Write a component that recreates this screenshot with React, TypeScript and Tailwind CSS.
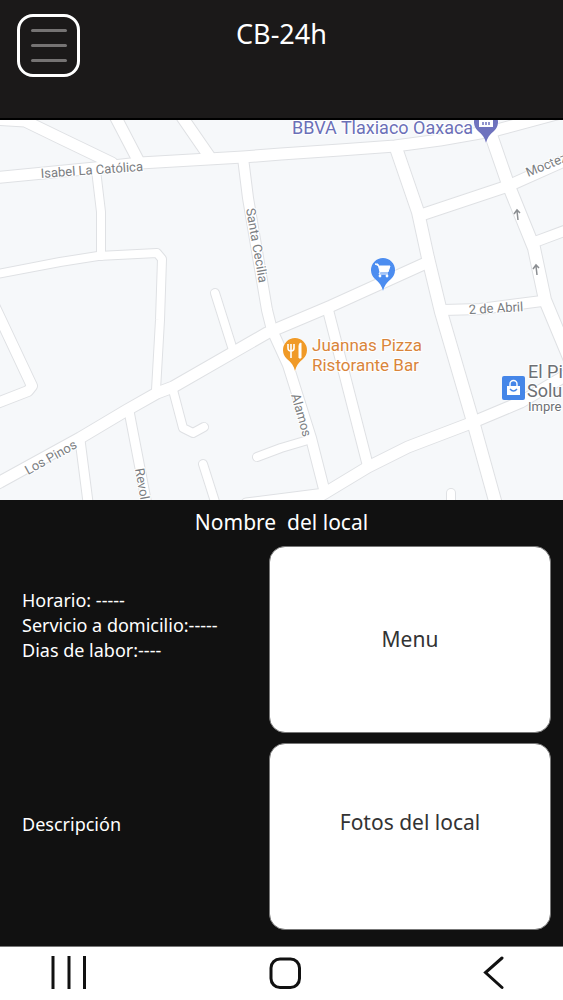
import React from "react";

type Road = { d: string; w: number };

const roads: Road[] = [
  { d: "M-8 178 L95 168 L140 163 L243 157 L281 154 L340 150 L395 146 L440 140 L497 130 L575 109", w: 11 },
  { d: "M-8 119 L25 121 L60 138 L112 163", w: 11 },
  { d: "M114 114 L139 162", w: 11 },
  { d: "M180 114 L209 156", w: 11 },
  { d: "M96 170 L101 212 L101 256", w: 8 },
  { d: "M-8 275 L60 262 L98 256 L157 253 L162 259 L160 320 L156 390", w: 8 },
  { d: "M243 158 L248 198 L267 310 L272 330 L288 365 L311 438 L325 493", w: 10 },
  { d: "M215 293 L233 350", w: 8 },
  { d: "M-8 301 L0 318 L32 386 L28 391 L-8 405", w: 10 },
  { d: "M-8 486 L0 482 L80 438 L127 410 L157 393 L173 387 L267 333 L331 306 L426 263", w: 11 },
  { d: "M80 440 L89 510", w: 9 },
  { d: "M129 411 L148 510", w: 9 },
  { d: "M173 390 L183 428 L193 433 L204 427", w: 8 },
  { d: "M203 464 L217 508", w: 8 },
  { d: "M257 457 L281 448 L308 440", w: 8 },
  { d: "M246 503 L325 493", w: 9 },
  { d: "M296 510 L325 493 L368 467 L408 447 L471 423 L521 402 L575 370", w: 11 },
  { d: "M328 310 L368 466", w: 10 },
  { d: "M396 148 L418 212 L428 258 L441 312 L474 425 L497 508", w: 12 },
  { d: "M421 215 L508 186 L575 156", w: 11 },
  { d: "M490 132 L508 184 L534 248 L545 300 L575 372", w: 12 },
  { d: "M532 243 L575 227", w: 10 },
  { d: "M443 310 L480 309 L542 301", w: 10 },
  { d: "M451 493 L451 510", w: 8 },
];

function Pin({ x, y, color, children }: { x: number; y: number; color: string; children: React.ReactNode }) {
  return (
    <g transform={`translate(${x} ${y})`}>
      <path
        d="M0 21 C-1 16 -4 12 -8 9 A12 12 0 1 1 8 9 C4 12 1 16 0 21Z"
        fill={color}
        stroke="#fff"
        strokeWidth="1"
        paintOrder="stroke"
      />
      {children}
    </g>
  );
}

function StreetMap() {
  return (
    <svg
      viewBox="0 120 563 380"
      preserveAspectRatio="xMidYMid slice"
      className="block h-[380px] w-full bg-[#f6f8fa] font-['Roboto',sans-serif]"
      role="img"
      aria-label="Mapa"
    >
      <g fill="none" stroke="#dfe1e4" strokeLinecap="round" strokeLinejoin="round">
        {roads.map((r) => (
          <path key={r.d} d={r.d} strokeWidth={r.w + 2} />
        ))}
      </g>
      <g fill="none" stroke="#ffffff" strokeLinecap="round" strokeLinejoin="round">
        {roads.map((r) => (
          <path key={r.d} d={r.d} strokeWidth={r.w} />
        ))}
      </g>

      <g fill="#7b7e82" fontSize="13" stroke="#fff" strokeWidth="2" paintOrder="stroke">
        <text transform="translate(41 178) rotate(-4)">Isabel La Católica</text>
        <text transform="translate(246 209) rotate(80)">Santa Cecilia</text>
        <text transform="translate(291 395) rotate(74)">Alamos</text>
        <text transform="translate(28 475) rotate(-29)">Los Pinos</text>
        <text transform="translate(135 469) rotate(80)">Revol</text>
        <text transform="translate(469 314) rotate(-3)">2 de Abril</text>
        <text transform="translate(528 177) rotate(-22)">Moctez</text>
      </g>

      <g fill="none" stroke="#8b8e92" strokeWidth="1.5">
        <path d="M518 220 L517 211 M514 214 L517 210 L520 213" />
        <path d="M537 275 L536 266 M533 269 L536 265 L539 268" />
      </g>

      <text x="292" y="134" fontSize="18" fill="#6b70b8" stroke="#fff" strokeWidth="2" paintOrder="stroke">
        BBVA Tlaxiaco Oaxaca
      </text>
      <Pin x={486} y={122} color="#6f73be">
        <path d="M-7 -4 H7 V5 H-7Z" fill="#fff" />
        <path d="M-3 3 V0 M0 3 V0 M3 3 V0" stroke="#6f73be" strokeWidth="1.5" />
      </Pin>

      <Pin x={383} y={270} color="#4c8df0">
        <path d="M-8 -6 H-5 L-3 2 H5 L7 -4 H-4Z" fill="#fff" stroke="#fff" strokeWidth="1" strokeLinejoin="round" />
        <path d="M-3 2 L-4 4 H5" fill="none" stroke="#fff" strokeWidth="1" />
        <circle cx="-3" cy="6" r="1.4" fill="#fff" />
        <circle cx="4" cy="6" r="1.4" fill="#fff" />
      </Pin>

      <Pin x={295} y={350} color="#f09a27">
        <path d="M-7 -6 V-2 Q-7 1 -4 1 Q-1 1 -1 -2 V-6 M-4 -6 V8" fill="none" stroke="#fff" strokeWidth="1.6" />
        <path d="M6 8 H4 V-4 Q4 -7 6 -7Z" fill="#fff" stroke="#fff" strokeWidth="1" />
      </Pin>
      <g fontSize="17" fill="#d9853b" stroke="#fff" strokeWidth="2" paintOrder="stroke">
        <text x="312" y="351">Juannas Pizza</text>
        <text x="312" y="371">Ristorante Bar</text>
      </g>

      <rect x="502" y="376" width="23" height="24" rx="2" fill="#4586e8" />
      <path d="M507 386 H520 V395 H507Z" fill="#fff" />
      <path d="M510 386 V384 A3.5 3.5 0 0 1 517 384 V386" fill="none" stroke="#fff" strokeWidth="1.4" />
      <path d="M510 389 Q513.5 393 517 389" fill="none" stroke="#4586e8" strokeWidth="1.4" />
      <g fill="#6d7074" stroke="#fff" strokeWidth="2" paintOrder="stroke">
        <text x="528" y="378" fontSize="18">El Pi</text>
        <text x="527" y="397" fontSize="18">Solu</text>
        <text x="528" y="411" fontSize="13">Impre</text>
      </g>
    </svg>
  );
}

export default function App() {
  return (
    <div className="flex min-h-screen flex-col bg-[#111111] font-['Noto_Sans','Open_Sans',sans-serif] text-white">
      <header className="grid h-[120px] grid-cols-[1fr_auto_1fr] items-start border-b-2 border-black bg-[#1b1919] px-[17px] pt-3.5">
        <button
          type="button"
          aria-label="Abrir menú"
          className="flex size-[63px] flex-col items-center justify-center gap-3 rounded-2xl border-3 border-white"
        >
          <span className="h-[3px] w-9 rounded-full bg-[#757373]" />
          <span className="h-[3px] w-9 rounded-full bg-[#757373]" />
          <span className="h-[3px] w-9 rounded-full bg-[#757373]" />
        </button>
        <h1 className="text-[27px] leading-10">CB-24h</h1>
      </header>

      <StreetMap />

      <main className="flex grow flex-col px-3 pb-4">
        <h2 className="pt-[7px] pb-[9px] text-center text-[21px] leading-[30px] whitespace-pre">Nombre  del local</h2>
        <div className="grid grow grid-cols-[245fr_282fr] gap-x-3 gap-y-2.5">
          <div className="flex flex-col justify-center pb-7 pl-2.5 text-[18px] leading-[25px] whitespace-nowrap">
            <p>Horario: -----</p>
            <p>Servicio a domicilio:-----</p>
            <p>Dias de labor:----</p>
          </div>
          <button
            type="button"
            className="min-h-[187px] rounded-2xl border border-[#777777] bg-white text-[21px] text-[#333333]"
          >
            Menu
          </button>
          <div className="flex items-center pb-6 pl-2.5 text-[18px] leading-[25px]">
            <p>Descripción</p>
          </div>
          <button
            type="button"
            className="min-h-[187px] rounded-2xl border border-[#777777] bg-white pb-7 text-[21px] text-[#333333]"
          >
            Fotos del local
          </button>
        </div>
      </main>

      <nav className="flex h-[54px] items-center justify-between border-t border-[#777777] bg-white px-12 text-[#111111]">
        <button type="button" aria-label="Recientes" className="flex h-9 w-10 items-center justify-center">
          <svg viewBox="0 0 40 36" className="h-9 w-10" fill="none" stroke="currentColor" strokeWidth="3">
            <path d="M5 0 V33 M21 0 V33 M36.5 0 V33" />
          </svg>
        </button>
        <button type="button" aria-label="Inicio" className="flex h-9 w-10 items-center justify-center">
          <svg viewBox="0 0 40 36" className="h-9 w-10" fill="none" stroke="currentColor" strokeWidth="3">
            <rect x="9" y="3" width="28.5" height="28.5" rx="9" />
          </svg>
        </button>
        <button type="button" aria-label="Atrás" className="flex h-9 w-10 items-center justify-center">
          <svg
            viewBox="0 0 40 36"
            className="h-9 w-10"
            fill="none"
            stroke="currentColor"
            strokeWidth="3"
            strokeLinecap="round"
          >
            <path d="M27 2 L10.500 16.500 L27 31.500" />
          </svg>
        </button>
      </nav>
    </div>
  );
}
